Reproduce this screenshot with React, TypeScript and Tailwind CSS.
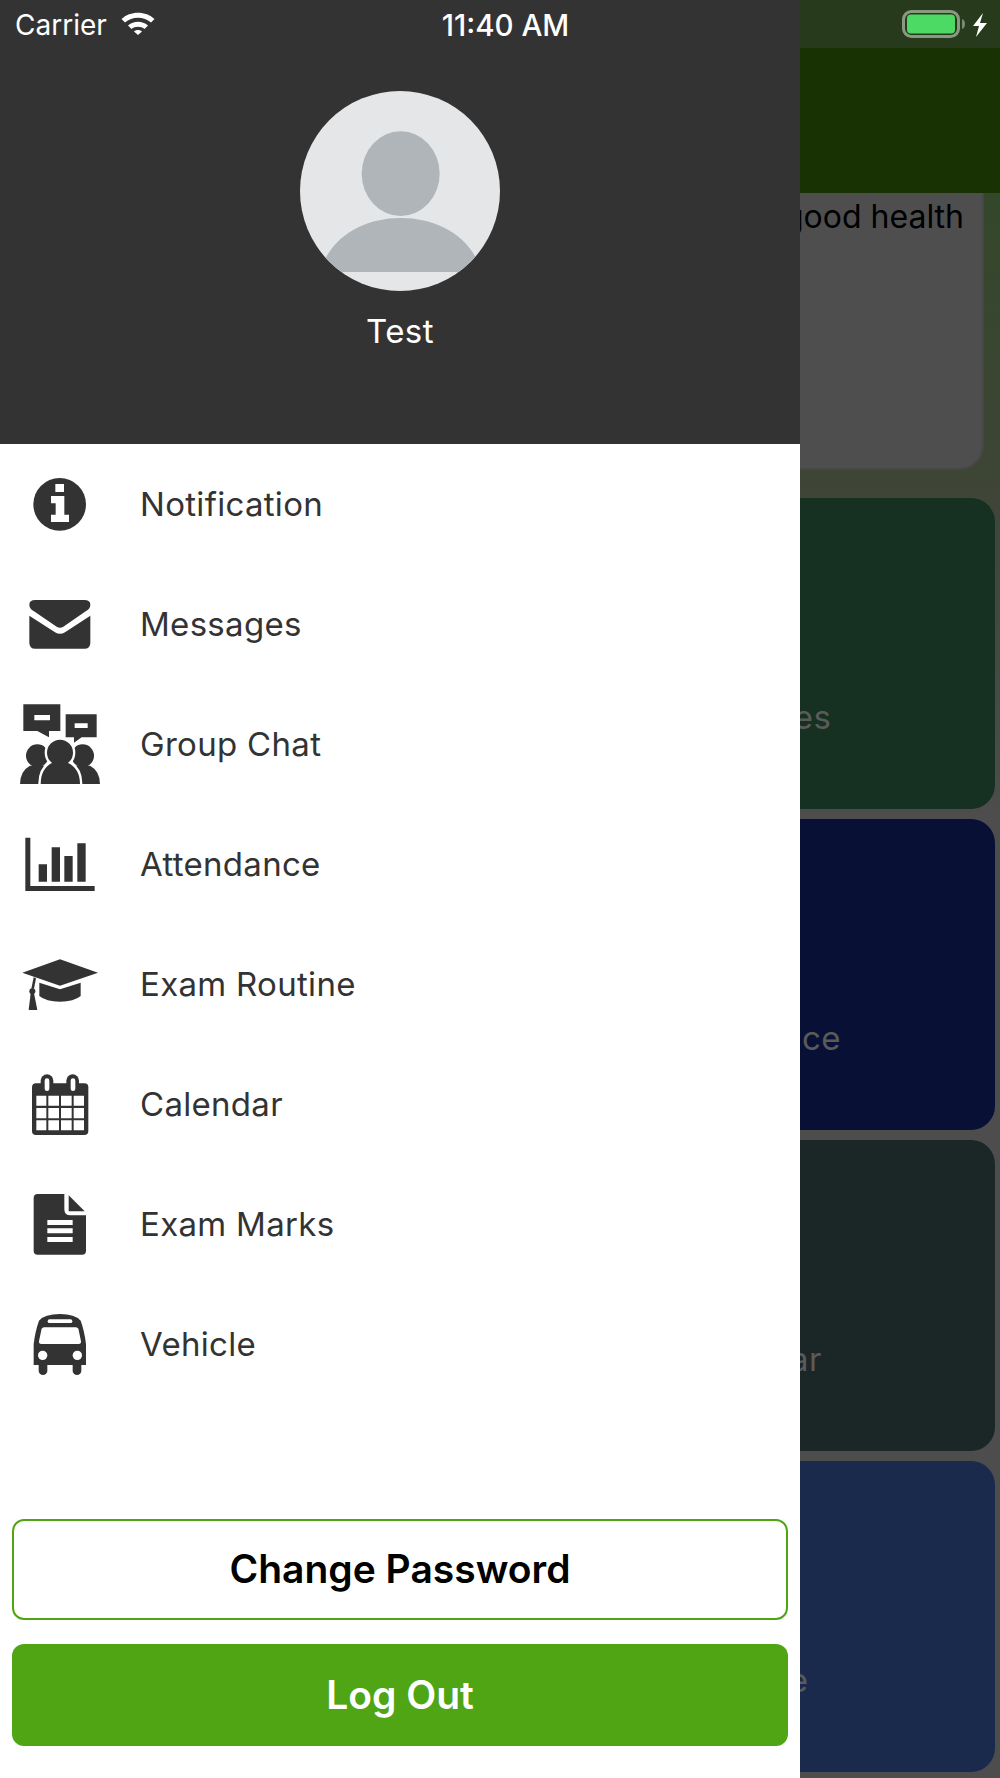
import React from "react";

const ink = "#333333";

function Icon({ box, children }: { box: string; children: React.ReactNode }) {
  return (
    <svg viewBox={box} className="w-[80px] h-[80px] shrink-0" fill={ink}>
      {children}
    </svg>
  );
}

const menu: { label: string; icon: React.ReactNode }[] = [
  {
    label: "Notification",
    icon: (
      <Icon box="60 12 240 240">
        <circle cx="179" cy="133" r="79" />
        <path fill="#fff" d="M166 72h26v24h-26zM153 108h40v56h14v22h-54v-22h14v-34h-14z" />
      </Icon>
    ),
  },
  {
    label: "Messages",
    icon: (
      <Icon box="60 372 240 240">
        <path d="M106 420H253q18 0 18 14q0 12-14 20L190 500q-10 6-20 0L102 454q-14-8-14-20q0-14 18-14z" />
        <path d="M88 467L165 517q15 9 30 0L271 467V548q0 18-18 18H106q-18 0-18-18z" />
      </Icon>
    ),
  },
  {
    label: "Group Chat",
    icon: (
      <Icon box="60 732 240 240">
        <circle cx="112" cy="887" r="34" />
        <path d="M60 973q0-40 30-56h50v56z" />
        <circle cx="248" cy="887" r="34" />
        <path d="M300 973q0-40-30-56h-50v56z" />
        <g stroke="#fff" strokeWidth="14" fill="#fff">
          <circle cx="180" cy="878" r="39" />
          <path d="M122 980v-10q0-45 35-62h46q37 17 37 62v10z" />
        </g>
        <circle cx="180" cy="878" r="39" />
        <path d="M122 973q0-48 35-65h46q37 17 37 65z" />
        <rect x="100" y="973" width="160" height="10" fill="#fff" />
        <path fillRule="evenodd" d="M70 733H181V813H147V832L112 813H70zM103 765v16h47v-16z" />
        <path fillRule="evenodd" d="M197 763H290V832H245L222 848V832H197zM224 790v14h39v-14z" />
      </Icon>
    ),
  },
  {
    label: "Attendance",
    icon: (
      <Icon box="60 1092 240 240">
        <path d="M76 1133h15v145h193v15H76z" />
        <path d="M116 1213h25v52h-25zM155 1162h25v103h-25zM193 1188h25v77h-25zM232 1150h25v115h-25z" />
      </Icon>
    ),
  },
  {
    label: "Exam Routine",
    icon: (
      <Icon box="60 72 240 240">
        <path d="M180 118L294 158L180 197L67 158z" />
        <path d="M118 188L180 208L242 188V228q-20 17-62 17q-42 0-62-17z" />
        <path d="M101 172l7 3L102 206h-8z" />
        <circle cx="97" cy="214" r="9" />
        <path d="M92 220h10l10 50h-26z" />
      </Icon>
    ),
  },
  {
    label: "Calendar",
    icon: (
      <Icon box="60 432 240 240">
        <rect x="96" y="490" width="169" height="155" rx="12" />
        <rect x="122" y="463" width="38" height="60" rx="19" />
        <rect x="199" y="463" width="38" height="60" rx="19" />
        <g fill="#fff">
          <rect x="134" y="475" width="14" height="38" rx="7" />
          <rect x="212" y="475" width="14" height="38" rx="7" />
          <path d="M109 527h30v30h-30zM145 527h32v30h-32zM183 527h32v30h-32zM221 527h31v30h-31z" />
          <path d="M109 564h30v31h-30zM145 564h32v31h-32zM183 564h32v31h-32zM221 564h31v31h-31z" />
          <path d="M109 601h30v30h-30zM145 601h32v30h-32zM183 601h32v30h-32zM221 601h31v30h-31z" />
        </g>
      </Icon>
    ),
  },
  {
    label: "Exam Marks",
    icon: (
      <Icon box="60 792 240 240">
        <path d="M113 822H193V868q0 18 18 18H258V992q0 12-12 12H113q-12 0-12-12V834q0-12 12-12z" />
        <path d="M206 826L254 874H206z" />
        <path fill="#fff" d="M142 900h76v15h-76zM142 925h76v15h-76zM142 951h76v15h-76z" />
      </Icon>
    ),
  },
  {
    label: "Vehicle",
    icon: (
      <Icon box="60 1152 240 240">
        <path d="M180 1182q45 0 62 20q11 30 16 70v63H101v-63q5-40 16-70q17-20 63-20z" />
        <rect x="116" y="1320" width="26" height="45" rx="13" />
        <rect x="218" y="1320" width="26" height="45" rx="13" />
        <rect x="143" y="1198" width="74" height="11" rx="5.5" fill="#fff" />
        <path fill="#fff" d="M133 1222H227q8 0 9 8l7 34q1 8-7 8H124q-8 0-7-8l7-34q1-8 9-8z" />
        <circle cx="128" cy="1306" r="14" fill="#fff" />
        <circle cx="232" cy="1306" r="14" fill="#fff" />
      </Icon>
    ),
  },
];

const cards = [
  { bg: "bg-[#163022]", right: "Messages" },
  { bg: "bg-[#081135]", right: "Attendance" },
  { bg: "bg-[#1b2727]", right: "Calendar" },
  { bg: "bg-[#1a2a4c]", right: "Vehicle" },
];

export default function App() {
  return (
    <div
      className="relative w-[1000px] h-[1778px] overflow-hidden bg-[linear-gradient(180deg,#33472a_190px,#3e4536_480px,#4d4d4d_820px)]"
      style={{ fontFamily: "Inter, 'Liberation Sans', sans-serif" }}
    >
      {/* page behind the drawer */}
      <div className="h-12 bg-[#283a1c]" />
      <div className="h-[145px] bg-[#193203]" />
      <div className="mx-4 h-[277px] rounded-b-[24px] border-2 border-t-0 border-[#474747] bg-[#4e4e4e] pr-[18px] text-right text-[32px] leading-[48px] text-black">
        Stay in good health
      </div>
      <div className="mt-[28px] px-[5px] grid grid-cols-2 gap-x-[10px] gap-y-[10px]">
        {cards.flatMap((c) => [
          <div key={c.right + "-left"} className={`${c.bg} h-[311px] rounded-[24px]`} />,
          <div
            key={c.right}
            className={`${c.bg} h-[311px] rounded-[24px] flex items-end justify-center pb-[72px] text-[33px] leading-[40px] tracking-[0.4px] text-[#5a5a5a]`}
          >
            {c.right}
          </div>,
        ])}
      </div>

      {/* drawer */}
      <div className="absolute left-0 top-0 w-[800px] h-full bg-white flex flex-col">
        <div className="h-[444px] bg-[#333333] flex flex-col items-center pt-[91px] shrink-0">
          <svg viewBox="60 32 600 600" className="w-[200px] h-[200px]">
            <defs>
              <clipPath id="av">
                <circle cx="360" cy="332" r="300" />
              </clipPath>
            </defs>
            <circle cx="360" cy="332" r="300" fill="#e4e6e8" />
            <ellipse cx="362" cy="280" rx="117" ry="127" fill="#afb5b8" />
            <path
              clipPath="url(#av)"
              fill="#afb5b8"
              d="M120 575C150 470 250 413 362 413C475 413 575 470 605 575Z"
            />
          </svg>
          <div className="mt-[20px] text-[33px] leading-10 tracking-[0.4px] text-white">Test</div>
        </div>

        <div className="flex flex-col">
          {menu.map((m) => (
            <div key={m.label} className="h-[120px] flex items-center pl-5">
              {m.icon}
              <span className="ml-10 mt-[2px] text-[33px] tracking-[0.3px] text-[#333333]">{m.label}</span>
            </div>
          ))}
        </div>

        <div className="mt-auto px-3 pb-8 flex flex-col gap-[24px]">
          <button className="h-[101px] rounded-xl border-2 border-[#4fa514] bg-white text-[39px] font-semibold text-black">
            Change Password
          </button>
          <button className="h-[102px] rounded-xl bg-[#4fa514] text-[39px] font-semibold text-white">
            Log Out
          </button>
        </div>
      </div>

      {/* status bar */}
      <div className="absolute inset-x-0 top-0 h-[50px] grid grid-cols-[1fr_auto_1fr] items-center pl-[15px] pr-3 text-white">
        <div className="flex items-center gap-[14px] text-[28px]">
          <span>Carrier</span>
          <svg viewBox="0 0 34 23" className="w-[34px] h-[23px] -mt-[4px]" fill="#fff">
            <path d="M0.5 7C9-1.5 25-1.5 33.5 7L30 10.5C23 4 11 4 4 10.5z" />
            <path d="M7 13.5C13 8.5 21 8.5 27 13.5L23.5 17C20 14 14 14 10.5 17z" />
            <path d="M13 19.5C15 17.5 19 17.5 21 19.5L17 23z" />
          </svg>
        </div>
        <div className="ml-2 text-[29.5px] font-medium">11:40 AM</div>
        <div className="flex justify-end -mt-[2px]">
          <svg viewBox="0 0 86 30" className="w-[86px] h-[30px]">
            <rect x="1.5" y="2.5" width="55" height="25" rx="8" fill="none" stroke="#8a9a82" strokeWidth="3" />
            <rect x="5" y="5.5" width="48" height="19" rx="4" fill="#4cd964" />
            <path d="M60 10q3 1 3 5t-3 5z" fill="#7b8a73" />
            <path d="M81 4L71 17H77L74 28L85 14H78z" fill="#fff" />
          </svg>
        </div>
      </div>
    </div>
  );
}
